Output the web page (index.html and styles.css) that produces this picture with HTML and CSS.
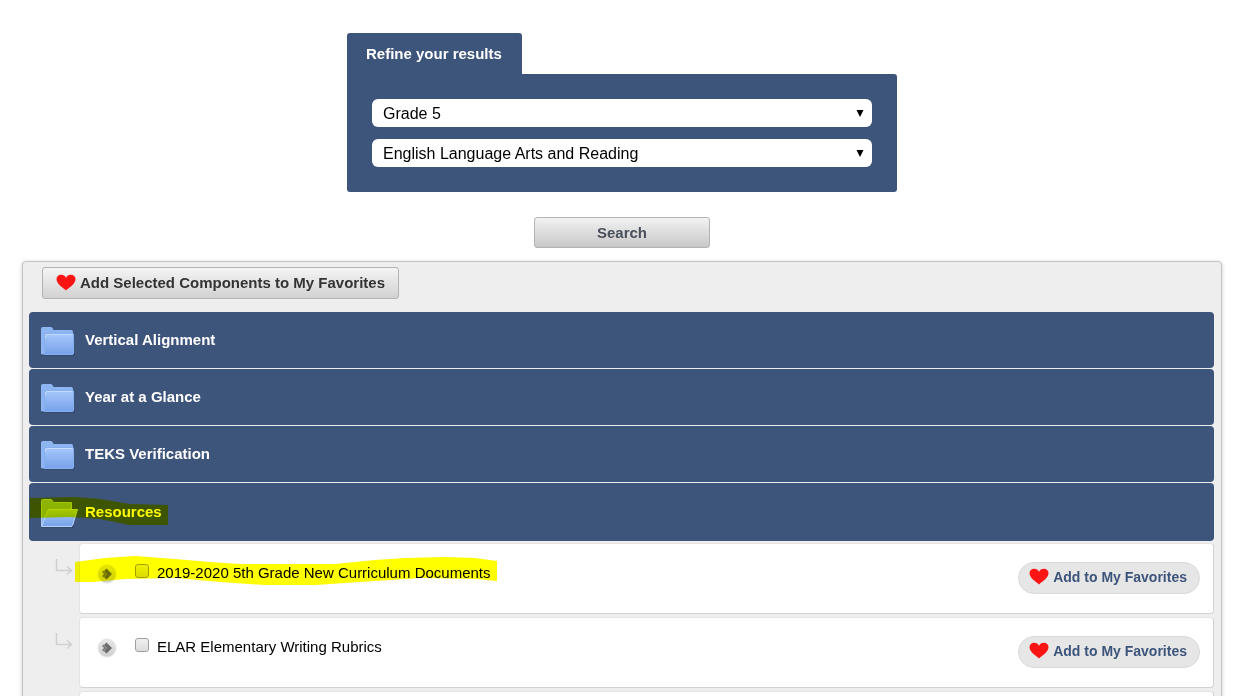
FILE: index.html
```html
<!DOCTYPE html>
<html lang="en">
<head>
    <meta charset="UTF-8">
    <meta name="viewport" content="width=device-width, initial-scale=1.0">
    <link rel="stylesheet" href="styles.css">
    <title>Curriculum Search</title>
</head>
<body>
    <!-- shared icons -->
    <svg class="icon-defs" aria-hidden="true">
        <defs>
            <linearGradient id="folderFill" x1="0" y1="0" x2="0" y2="1">
                <stop offset="0" stop-color="#a6c8fa"/>
                <stop offset="1" stop-color="#77a1ea"/>
            </linearGradient>
            <linearGradient id="roundFill" x1="0" y1="0" x2="0" y2="1">
                <stop offset="0" stop-color="#e6e6e6"/>
                <stop offset="1" stop-color="#cfcfcf"/>
            </linearGradient>
        </defs>
        <symbol id="heart" viewBox="0 0 20 17">
            <path fill="#fb1414" d="M10 16.500C8 14 0.500 10.500 0.500 5C0.500 2.500 2.600 0.800 5 0.800C7.300 0.800 9.300 2 10 4C10.700 2 12.700 0.800 15 0.800C17.400 0.800 19.500 2.500 19.500 5C19.500 10.500 12 14 10 16.500Z"/>
        </symbol>
        <symbol id="folder" viewBox="0 0 38 32">
            <path fill="#2f4468" d="M1 27h34v3H1z" opacity=".6"/>
            <path fill="#8db5f2" stroke="#8fb6f0" d="M1.500 28V2.500Q1.500 1.500 2.500 1.500H11.500L13.500 4.500H31.500Q32.500 4.500 32.500 5.500V28Z"/>
            <path fill="url(#folderFill)" stroke="#86aff0" d="M4.500 9Q4.500 7.500 6 7.500H32.500Q33.500 7.500 33.500 8.500V27Q33.500 28.500 32 28.500H4.500Z"/>
            <path fill="none" stroke="#c3dbfd" d="M5.500 12V10Q5.500 8.500 7 8.500H32.500"/>
        </symbol>
        <symbol id="folderOpen" viewBox="0 0 38 32">
            <path fill="#2f4468" d="M1 27h33v3H1z" opacity=".6"/>
            <path fill="#8db5f2" stroke="#a5c8f8" d="M1.500 28V2.500Q1.500 1.500 2.500 1.500H11.500L13.500 4.500H31.500V28Z"/>
            <path fill="url(#folderFill)" stroke="#b7d4fc" d="M8.500 11.500H37.500L32.500 27.500Q32 28.500 31 28.500H1.500Z"/>
        </symbol>
        <symbol id="branch" viewBox="0 0 18 18">
            <path fill="none" stroke="#d0d0d0" stroke-width="1.500" d="M1.500 0V11.500H16M12 7.500L16.500 11.500L12 15.500"/>
        </symbol>
        <symbol id="expand" viewBox="0 0 20 20">
            <circle cx="10" cy="10" r="9" fill="url(#roundFill)" stroke="#e4e4e4"/>
            <path fill="#6b6b6b" d="M7 7L9.500 4.500L15 10L9.500 15.500L7 13L10 10Z"/>
            <path fill="#7d7d7d" d="M5 8L6.500 6.500L10 10L6.500 13.500L5 12L7 10Z"/>
        </symbol>
    </svg>

    <form class="search-form">
        <div class="tab">Refine your results</div>
        <div class="filters">
            <select aria-label="Grade">
                <option>Grade 5</option>
            </select>
            <select aria-label="Subject">
                <option>English Language Arts and Reading</option>
            </select>
        </div>
        <button type="button" class="btn btn-search">Search</button>
    </form>

    <div class="results">
        <button type="button" class="btn btn-add"><svg class="heart"><use href="#heart"/></svg>Add Selected Components to My Favorites</button>

        <div class="folders">
            <button type="button" class="folder"><svg class="folder-icon"><use href="#folder"/></svg>Vertical Alignment</button>
            <button type="button" class="folder"><svg class="folder-icon"><use href="#folder"/></svg>Year at a Glance</button>
            <button type="button" class="folder"><svg class="folder-icon"><use href="#folder"/></svg>TEKS Verification</button>
            <button type="button" class="folder">
                <svg class="folder-icon"><use href="#folderOpen"/></svg>Resources
                <svg class="marker marker-folder" viewBox="0 0 138 29"><path d="M0 1L45 0L70 2L100 7L138 8V28H100L70 22L40 20L0 21Z"/></svg>
            </button>
        </div>

        <ul class="items">
            <li class="row">
                <svg class="branch"><use href="#branch"/></svg>
                <div class="item">
                    <button type="button" class="expand" aria-label="Expand"><svg><use href="#expand"/></svg></button>
                    <input type="checkbox" id="doc1">
                    <label for="doc1">2019-2020 5th Grade New Curriculum Documents</label>
                    <button type="button" class="pill"><svg class="heart"><use href="#heart"/></svg>Add to My Favorites</button>
                    <svg class="marker marker-item" viewBox="0 0 422 33"><path d="M0 6L30 2L60 0L100 3L135 6L165 8H260L300 4L330 2L370 1L400 2L422 5V25L400 23L345 22L300 25L240 29L190 29L145 26L100 22L50 23L18 26H0Z"/></svg>
                </div>
            </li>
            <li class="row">
                <svg class="branch"><use href="#branch"/></svg>
                <div class="item">
                    <button type="button" class="expand" aria-label="Expand"><svg><use href="#expand"/></svg></button>
                    <input type="checkbox" id="doc2">
                    <label for="doc2">ELAR Elementary Writing Rubrics</label>
                    <button type="button" class="pill"><svg class="heart"><use href="#heart"/></svg>Add to My Favorites</button>
                </div>
            </li>
            <li class="row">
                <svg class="branch"><use href="#branch"/></svg>
                <div class="item"></div>
            </li>
        </ul>
    </div>
</body>
</html>
```

FILE: styles.css
```css
* {
    box-sizing: border-box;
}

html {
    overflow: hidden;
}

body {
    margin: 0;
    padding: 33px 18px 0 22px;
    font-family: "Liberation Sans", Arial, sans-serif;
    font-size: 15px;
    background-color: #fff;
}

button {
    font-family: inherit;
    cursor: pointer;
}

.icon-defs {
    position: absolute;
    width: 0;
    height: 0;
}

/* Search form */
.search-form {
    display: flex;
    flex-direction: column;
    max-width: 550px;
    margin: 0 auto;
}

.tab {
    align-self: flex-start;
    padding: 12px 20px 12px 19px;
    line-height: 17px;
    font-weight: bold;
    color: #fff;
    background-color: #3d547b;
    border-radius: 3px 3px 0 0;
}

.filters {
    display: flex;
    flex-direction: column;
    gap: 12px;
    padding: 25px;
    background-color: #3d547b;
    border-radius: 0 3px 3px 3px;
}

select {
    width: 100%;
    height: 28px;
    padding: 0 11px;
    border: none;
    border-radius: 6px;
    font-family: inherit;
    font-size: 16px;
    color: #000;
    appearance: none;
    background: #fff url("data:image/svg+xml,%3Csvg xmlns='http://www.w3.org/2000/svg' width='8' height='8'%3E%3Cpath d='M0.500 1h7L4 8z'/%3E%3C/svg%3E") no-repeat right 8px center;
}

.btn {
    border: 1px solid #b3b3b3;
    border-radius: 3px;
    font-size: 15px;
    font-weight: bold;
    background: linear-gradient(#f2f2f2, #c8c8c8);
}

.btn-search {
    align-self: center;
    width: 176px;
    height: 31px;
    margin-top: 25px;
    color: #49505b;
}

/* Results */
.results {
    margin-top: 13px;
    padding: 5px 7px 40px 6px;
    background-color: #eee;
    border: 1px solid #c4c4c4;
    border-radius: 4px;
    box-shadow: 0 1px 4px rgba(0, 0, 0, 0.2);
}

.btn-add {
    display: flex;
    align-items: center;
    gap: 4px;
    height: 32px;
    margin-left: 13px;
    padding: 0 13px 2px;
    color: #333;
    background: linear-gradient(#f4f4f4, #d2d2d2);
}

.heart {
    width: 20px;
    height: 17px;
}

.folders {
    display: flex;
    flex-direction: column;
    gap: 1px;
    margin-top: 13px;
}

.folder {
    position: relative;
    display: flex;
    align-items: center;
    gap: 7px;
    height: 56px;
    padding: 0 11px 1px;
    border: none;
    border-radius: 4px;
    font-size: 15px;
    font-weight: bold;
    color: #fff;
    background-color: #3d547b;
}

.folder:last-child {
    height: 58px;
}

.folder-icon {
    width: 38px;
    height: 32px;
    margin-top: 4px;
}

.items {
    display: flex;
    flex-direction: column;
    gap: 3px;
    margin: 2px 0 0;
    padding: 0;
    list-style: none;
}

.row {
    display: flex;
}

.branch {
    width: 18px;
    height: 18px;
    margin: 16px 6px 0 26px;
}

.item {
    position: relative;
    flex: 1;
    display: flex;
    align-items: center;
    min-height: 71px;
    padding: 0 13px 12px 17px;
    background-color: #fff;
    border: 1px solid #d2d2d2;
    border-top-color: #e4e4e4;
    border-left-color: #e4e4e4;
    border-radius: 4px;
}

.expand {
    width: 20px;
    height: 20px;
    margin-top: 2px;
    padding: 0;
    border: none;
    background: none;
}

.expand svg {
    display: block;
    width: 20px;
    height: 20px;
}

.item input {
    appearance: none;
    width: 14px;
    height: 14px;
    margin: 0 8px 3px 18px;
    border: 1px solid #a0a0a0;
    border-radius: 3px;
    background: linear-gradient(#f0f0f0, #dcdcdc);
}

.item label {
    color: #000;
}

.pill {
    display: flex;
    align-items: center;
    gap: 4px;
    height: 32px;
    margin: 11px 0 0 auto;
    padding: 0 12px 3px 10px;
    border: 1px solid #dadada;
    border-radius: 16px;
    font-size: 14px;
    font-weight: bold;
    color: #3d547b;
    background-color: #e6e6e6;
}

/* Highlighter strokes */
.marker {
    position: absolute;
    fill: #ff0;
    mix-blend-mode: multiply;
    pointer-events: none;
}

.marker-folder {
    left: 1px;
    top: 14px;
    width: 138px;
    height: 29px;
}

.marker-item {
    left: -5px;
    top: 12px;
    width: 422px;
    height: 33px;
}
```
